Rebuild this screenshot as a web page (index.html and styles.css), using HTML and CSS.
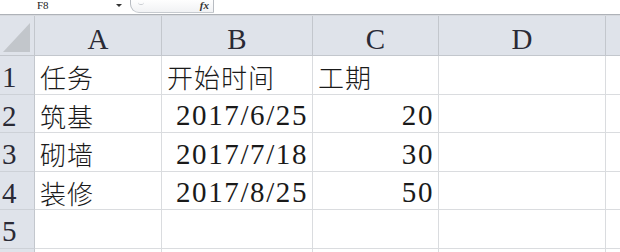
FILE: index.html
```html
<!DOCTYPE html>
<html>
<head>
<meta charset="utf-8">
<link rel="stylesheet" href="styles.css">
</head>
<body>
<div class="app">
  <div class="topbar">
    <div class="namebox"><span class="name">F8</span><span class="arrow"></span></div>
    <div class="fxbox">
      <span class="knob"></span>
      <span class="fx">fx</span>
    </div>
    <div class="input"></div>
  </div>
  <div class="sheet">
    <div class="corner hdr"><svg class="tri" width="28" height="30" viewBox="0 0 28 30"><polygon points="27,0 27,29 0,29" fill="#c2c6cb"/></svg></div>
    <div class="colhdr hdr">A</div>
    <div class="colhdr hdr">B</div>
    <div class="colhdr hdr">C</div>
    <div class="colhdr hdr">D</div>
    <div class="colhdr hdr last"></div>

    <div class="rowhdr r1">1</div>
    <div class="cell r1"><span class="cjk">任务</span></div>
    <div class="cell r1"><span class="cjk">开始时间</span></div>
    <div class="cell r1"><span class="cjk">工期</span></div>
    <div class="cell r1"></div>
    <div class="cell r1 last"></div>

    <div class="rowhdr r2">2</div>
    <div class="cell r2"><span class="cjk">筑基</span></div>
    <div class="cell r2 right"><span class="num">2017/6/25</span></div>
    <div class="cell r2 right"><span class="num">20</span></div>
    <div class="cell r2"></div>
    <div class="cell r2 last"></div>

    <div class="rowhdr r3">3</div>
    <div class="cell r3"><span class="cjk">砌墙</span></div>
    <div class="cell r3 right"><span class="num">2017/7/18</span></div>
    <div class="cell r3 right"><span class="num">30</span></div>
    <div class="cell r3"></div>
    <div class="cell r3 last"></div>

    <div class="rowhdr r4">4</div>
    <div class="cell r4"><span class="cjk">装修</span></div>
    <div class="cell r4 right"><span class="num">2017/8/25</span></div>
    <div class="cell r4 right"><span class="num">50</span></div>
    <div class="cell r4"></div>
    <div class="cell r4 last"></div>

    <div class="rowhdr r5">5</div>
    <div class="cell r5"></div>
    <div class="cell r5"></div>
    <div class="cell r5"></div>
    <div class="cell r5"></div>
    <div class="cell r5 last"></div>

    <div class="rowhdr r6"></div>
    <div class="cell r6"></div>
    <div class="cell r6"></div>
    <div class="cell r6"></div>
    <div class="cell r6"></div>
    <div class="cell r6 last"></div>
  </div>
</div>
</body>
</html>
```

FILE: styles.css
```css
html, body {
  margin: 0;
  padding: 0;
  background: #ffffff;
}
.app {
  width: 620px;
  height: 252px;
  overflow: hidden;
  font-family: "Liberation Serif", "Noto Sans CJK SC", serif;
  color: #1a1a1a;
}
.topbar {
  height: 14px;
  display: flex;
  border-bottom: 1px solid #aeb2b8;
  overflow: hidden;
}
.namebox {
  width: 130px;
  display: flex;
  align-items: flex-start;
}
.name {
  font-family: "Liberation Serif", serif;
  font-size: 11px;
  line-height: 11px;
  margin-top: 0;
  margin-left: 37px;
  color: #222;
}
.arrow {
  margin-left: 67px;
  margin-top: 4px;
  width: 0;
  height: 0;
  border-left: 3.5px solid transparent;
  border-right: 3.5px solid transparent;
  border-top: 3.5px solid #333;
}
.fxbox {
  width: 82px;
  height: 13px;
  border-left: 1px solid #b8bcc2;
  border-bottom: 1px solid #c6cacf;
  border-right: 1px solid #b8bcc2;
  border-bottom-left-radius: 9px;
  background: linear-gradient(#ffffff, #f1f2f4);
  display: flex;
  align-items: flex-start;
  margin-top: -1px;
}
.knob {
  width: 6px;
  height: 3px;
  margin-left: 7px;
  margin-top: 2px;
  border-bottom: 1px solid #c8ccd0;
  border-radius: 0 0 4px 4px;
}
.fx {
  margin-left: auto;
  margin-right: 4px;
  font-family: "Liberation Serif", serif;
  font-style: italic;
  font-weight: bold;
  font-size: 11px;
  line-height: 11px;
  margin-top: 1px;
  color: #333;
}
.input {
  flex: 1;
}
.sheet {
  display: grid;
  grid-template-columns: 35px 127px 151px 126px 167px 1fr;
  grid-template-rows: 40px 39px 38px 39px 38px 39px 20px;
  border-top: 1px solid #d6d9de;
}
.sheet > div {
  box-sizing: border-box;
}
.hdr {
  background: #dfe3ea;
  border-right: 1px solid #c3c7cd;
  border-bottom: 1px solid #c3c7cd;
}
.corner {
  display: flex;
  align-items: flex-end;
  justify-content: flex-end;
  padding: 0 3px 2px 0;
}
.tri {
  display: block;
}
.colhdr {
  display: flex;
  align-items: center;
  justify-content: center;
  font-family: "Liberation Serif", serif;
  font-size: 29px;
  padding-top: 7px;
  color: #2a2a35;
}
.rowhdr {
  background: #dfe3ea;
  border-right: 1px solid #c3c7cd;
  border-bottom: 1px solid #cdd1d7;
  display: flex;
  align-items: center;
  padding: 5px 0 0 2px;
  font-family: "Liberation Serif", serif;
  font-size: 29px;
  color: #2a2a35;
}
.cell {
  border-right: 1px solid #dadcdf;
  border-bottom: 1px solid #dadcdf;
  display: flex;
  align-items: center;
  padding: 3px 5px 0 5px;
  white-space: nowrap;
}
.cell.right {
  justify-content: flex-end;
  padding-right: 4px;
  padding-top: 4px;
}
.cell.last, .hdr.last {
  border-right: none;
}
.cjk {
  font-family: "Noto Sans CJK SC", sans-serif;
  font-size: 26px;
  font-weight: 300;
  letter-spacing: 1px;
}
.num {
  font-family: "Liberation Serif", serif;
  font-size: 29px;
  letter-spacing: 1.6px;
}
```
